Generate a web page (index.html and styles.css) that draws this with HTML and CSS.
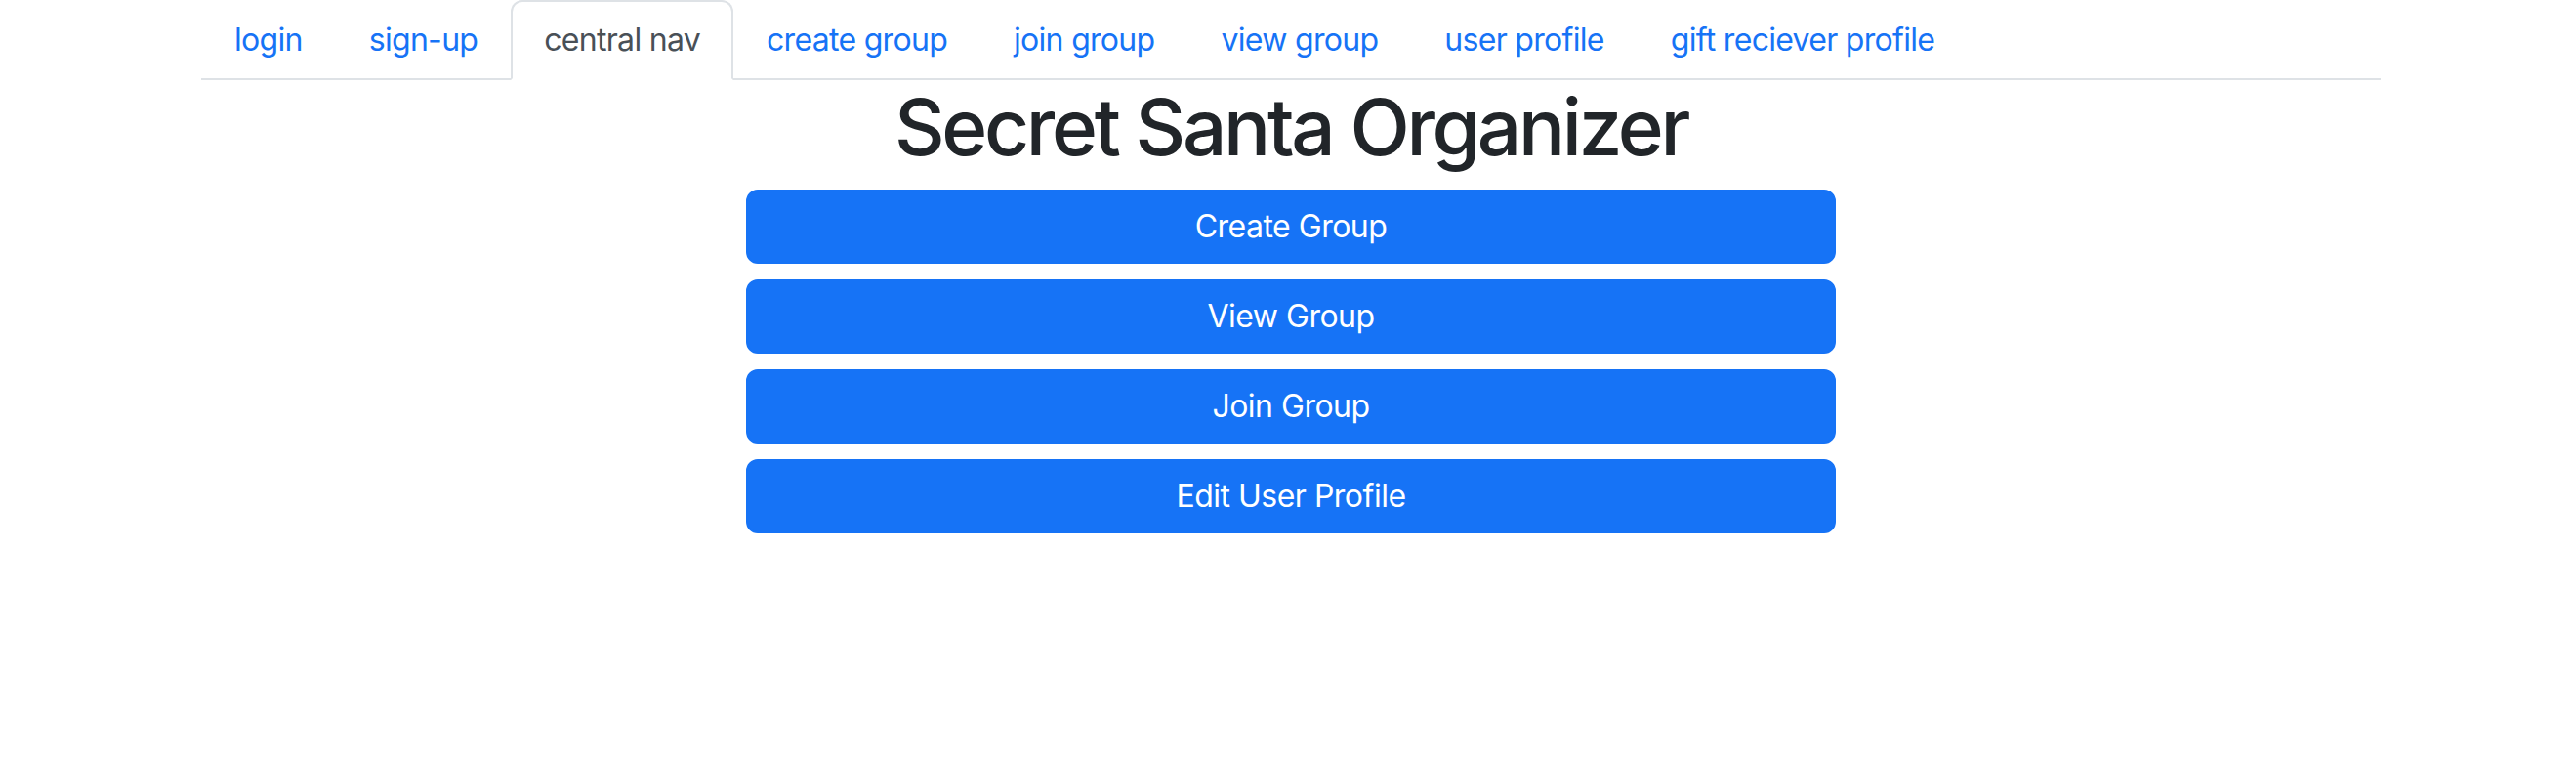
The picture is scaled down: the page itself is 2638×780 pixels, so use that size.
FILE: index.html
```html
<!DOCTYPE html>
<html lang="en">
<head>
<meta charset="utf-8">
<title>Secret Santa Organizer</title>
<link rel="stylesheet" href="styles.css">
</head>
<body>
<div class="container">
  <ul class="nav-tabs">
    <li class="nav-item"><a class="nav-link" href="#">login</a></li>
    <li class="nav-item"><a class="nav-link" href="#">sign-up</a></li>
    <li class="nav-item"><a class="nav-link active" href="#">central nav</a></li>
    <li class="nav-item"><a class="nav-link" href="#">create group</a></li>
    <li class="nav-item"><a class="nav-link" href="#">join group</a></li>
    <li class="nav-item"><a class="nav-link" href="#">view group</a></li>
    <li class="nav-item"><a class="nav-link" href="#">user profile</a></li>
    <li class="nav-item"><a class="nav-link" href="#">gift reciever profile</a></li>
  </ul>
  <h1 class="title">Secret Santa Organizer</h1>
  <div class="actions">
    <button class="btn" type="button">Create Group</button>
    <button class="btn" type="button">View Group</button>
    <button class="btn" type="button">Join Group</button>
    <button class="btn" type="button">Edit User Profile</button>
  </div>
</div>
</body>
</html>
```
FILE: styles.css
```css
html, body {
  margin: 0;
  padding: 0;
  background: #ffffff;
}

body {
  padding-left: 6px;
  font-family: Inter, "Liberation Sans", Arial, sans-serif;
  font-size: 32px;
  line-height: 48px;
  letter-spacing: -0.6px;
  color: #212529;
}

.container {
  width: 2232px;
  margin: 0 auto;
}

.nav-tabs {
  display: flex;
  list-style: none;
  margin: 0;
  padding: 0;
  border-bottom: 2px solid #dee2e6;
}

.nav-item {
  margin-bottom: -2px;
}

.nav-link {
  display: block;
  padding: 15px 32px;
  border: 2px solid transparent;
  border-top-left-radius: 12px;
  border-top-right-radius: 12px;
  color: #1673f6;
  letter-spacing: -0.7px;
  text-decoration: none;
}

.nav-link.active {
  color: #495057;
  background: #ffffff;
  border-color: #dee2e6 #dee2e6 #ffffff;
}

.title {
  margin: 0 0 16px;
  text-align: center;
  font-size: 80px;
  line-height: 96px;
  font-weight: 500;
  letter-spacing: -3.3px;
  color: #212529;
}

.actions {
  display: grid;
  gap: 16px;
  width: 1116px;
  margin: 0 auto;
}

.btn {
  display: block;
  height: 76px;
  padding: 12px 24px;
  border: 2px solid #1673f6;
  border-radius: 12px;
  background: #1673f6;
  color: #ffffff;
  font-family: inherit;
  font-size: 32px;
  line-height: 48px;
  letter-spacing: -0.5px;
  text-align: center;
  cursor: pointer;
}
```
